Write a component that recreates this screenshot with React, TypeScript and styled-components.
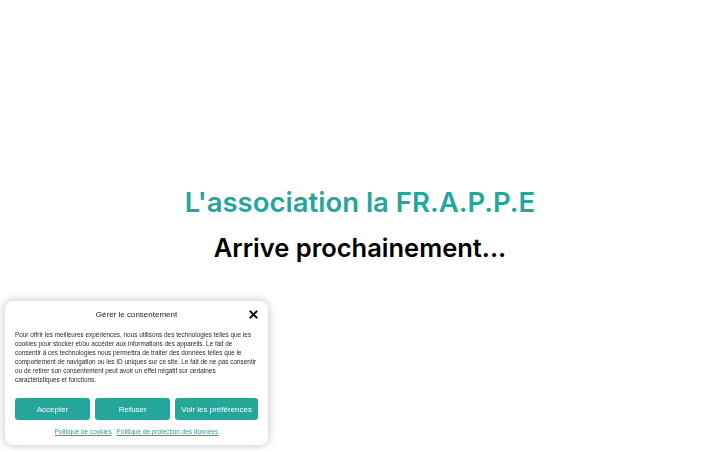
import React from 'react';
import styled, { createGlobalStyle } from 'styled-components';

const GlobalStyle = createGlobalStyle`
  html, body {
    margin: 0;
    padding: 0;
    background: #fff;
  }
`;

const Page = styled.div`
  height: 450px;
  display: flex;
  flex-direction: column;
  align-items: center;
  justify-content: center;
  font-family: Inter, 'Noto Sans', sans-serif;
`;

const Title = styled.h1`
  margin: 0;
  font-size: 27.5px;
  font-weight: 600;
  color: #24a69a;
  line-height: 44px;
`;

const Subtitle = styled.h2`
  margin: 2px 0 0;
  font-size: 25.5px;
  font-weight: 600;
  color: #000;
  line-height: 44px;
`;

const Banner = styled.div`
  position: fixed;
  left: 5px;
  bottom: 5px;
  width: 263px;
  box-sizing: border-box;
  padding: 7px 10px 10px;
  background: #fff;
  border-radius: 8px;
  box-shadow: 0 0 10px rgba(0, 0, 0, 0.25);
  font-family: 'Liberation Sans', Arial, sans-serif;
  color: #222;
`;

const BannerHead = styled.div`
  display: flex;
  align-items: center;
  justify-content: center;
  position: relative;
  height: 12px;
  font-size: 8px;
`;

const Close = styled.button`
  position: absolute;
  right: 0;
  top: 2px;
  border: none;
  background: none;
  padding: 0;
  display: flex;
  cursor: pointer;
`;

const BannerText = styled.p`
  margin: 10px 0 0;
  font-size: 6.4px;
  line-height: 9px;
  color: #2a2a2a;
`;

const Buttons = styled.div`
  display: grid;
  grid-template-columns: 1fr 1fr 1.1fr;
  gap: 5px;
  margin-top: 14px;
`;

const Button = styled.button`
  height: 22px;
  border: none;
  border-radius: 3px;
  background: #24a69a;
  color: #fff;
  font-family: 'Liberation Sans', Arial, sans-serif;
  font-size: 8px;
  padding: 0;
  cursor: pointer;
`;

const Links = styled.div`
  display: flex;
  justify-content: center;
  gap: 5px;
  margin-top: 8px;
`;

const Link = styled.a`
  font-size: 6.4px;
  color: #24a69a;
  text-decoration: underline;
`;

const CloseIcon = () => (
  <svg width="9" height="9" viewBox="0 0 10 10">
    <path d="M1.5 1.5 L8.5 8.5 M8.5 1.5 L1.5 8.5" stroke="#000" strokeWidth="2.2" strokeLinecap="round" />
  </svg>
);

const App = () => {
  return (
    <>
      <GlobalStyle />
      <Page>
        <Title>L'association la FR.A.P.P.E</Title>
        <Subtitle>Arrive prochainement...</Subtitle>
      </Page>
      <Banner>
        <BannerHead>
          Gérer le consentement
          <Close type="button">
            <CloseIcon />
          </Close>
        </BannerHead>
        <BannerText>
          Pour offrir les meilleures expériences, nous utilisons des technologies telles que les
          cookies pour stocker et/ou accéder aux informations des appareils. Le fait de
          consentir à ces technologies nous permettra de traiter des données telles que le
          comportement de navigation ou les ID uniques sur ce site. Le fait de ne pas consentir
          ou de retirer son consentement peut avoir un effet négatif sur certaines
          caractéristiques et fonctions.
        </BannerText>
        <Buttons>
          <Button type="button">Accepter</Button>
          <Button type="button">Refuser</Button>
          <Button type="button">Voir les préférences</Button>
        </Buttons>
        <Links>
          <Link href="#">Politique de cookies</Link>
          <Link href="#">Politique de protection des données</Link>
        </Links>
      </Banner>
    </>
  );
};

export default App;
